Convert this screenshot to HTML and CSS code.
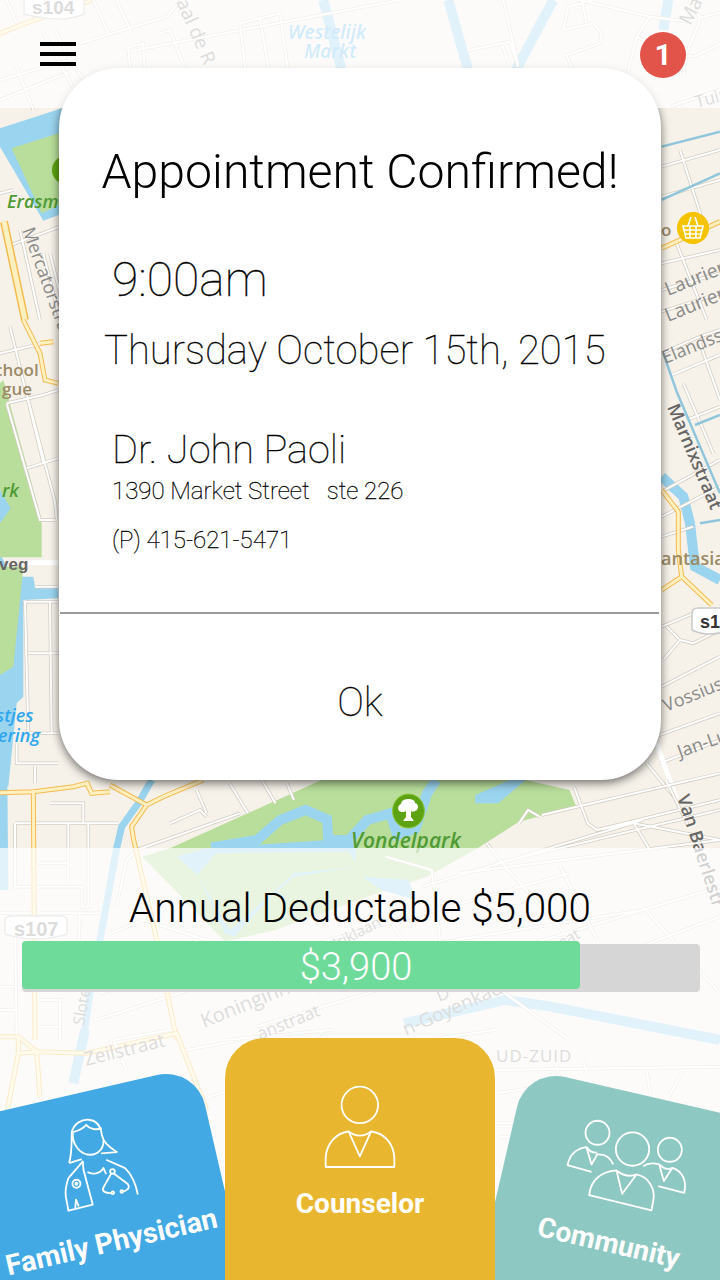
FILE: index.html
```html
<!DOCTYPE html>
<html lang="en">

<head>
  <meta name="viewport" content="width=device-width, initial-scale=1.0">
  <meta charset="utf-8">
  <title>Appointment Confirmed</title>
  <link rel="stylesheet" href="styles.css">
</head>

<body>
  <div class="screen">

    <!-- map backdrop, traced in groups so each strip keeps its own scale -->
    <svg class="map" viewBox="0 0 720 1280" width="720" height="1280">
      <defs>
        <path id="st-top" d="M240 130L500 50L545 0M0 240L240 170M20 0L50 70M130 100L240 300M50 200L100 330M165 90L215 190L280 280M380 145L430 130L440 324M480 100L510 90L600 324M720 70L840 40L880 324M720 70L750 324M780 55L825 324M0 300L210 215M385 145L400 324M280 0L330 110M350 0L395 100M410 150L1200 0M1410 150L1530 125L1555 200M1505 130L1530 200M1510 0L1555 200M1690 90L1780 70L1805 100L1800 130L1700 165L1725 230M1690 90L1705 20L1780 0M1760 70L1745 0M1950 50L1910 110L2000 155L2080 170L2230 100M1740 0L1950 50L2070 65L2110 50L2180 35L2250 70L2350 105M2100 60L2060 160L2050 230M1980 150L1950 230M1910 110L1880 230M2070 0L2080 30L2105 55"/>
        <path id="st-eras" d="M0 580L40 570M20 740L180 680M130 760L180 960M150 760L200 960M60 690L120 960"/>
        <path id="st-left" d="M0 100L130 70M20 250L130 225L175 210M20 250L120 600L165 600M85 240L165 545L170 600M80 445L175 415M30 20L130 430M75 845L175 845M75 845L85 1240L175 1240M150 845L155 1240M85 1000L175 1000M50 1270L50 1330L175 1330M105 1340L105 1390M105 800L175 800"/>
        <path id="st-right" d="M185 100L300 50L360 30M215 165L360 105M260 300L360 260M185 515L360 420M185 590L360 500M185 650L280 620M185 920L280 880M190 1020L240 960L200 920M240 960L280 970L360 930M185 1100L360 1010M165 1250L360 1180M180 1330L360 1260M140 1330L230 1440M250 190L340 400M300 70L360 240"/>
        <path id="st-right2" d="M905 500L1080 450M905 590L1080 540M960 450L1040 700M905 790L1080 750M950 730L1040 960M905 870L1080 820M905 935L1080 880M930 320L1080 270"/>
        <path id="st-mid" d="M500 70L540 160M570 60L600 130M625 70L640 120M1060 250L1100 320L1250 550M1250 80L1280 190L1300 210L1380 190L1420 280M1130 190L1150 150L1175 170M1180 165L1568 40M1300 210L1568 120M1380 190L1568 240M1080 310L1568 150M1220 320L1300 540M1000 340L1568 240M1450 60L1500 200M920 380L1400 180M840 290L940 330L960 560M400 660L1240 340M560 800L1568 380M900 560L1400 450M1000 600L1240 840M1280 620L1568 470M1400 440L1568 700M600 530L700 700M840 470L980 720"/>
        <path id="st-corner" d="M45 130L355 130M45 130L45 320L245 320L245 380L265 380L265 310M205 130L205 310M115 250L205 250M265 130L265 320M150 70L250 70L250 130M510 130L600 90L620 110M590 30L620 100M410 210L720 100M410 210L380 240L350 380M330 460L430 420L620 480M300 640L720 520M290 720L600 620M0 400L300 400M45 400L50 780M0 620L50 620M0 690L50 690M120 660L180 660L180 780M120 740L180 740M240 400L230 620"/>
        <path id="st-low" d="M340 30L510 0M340 30L380 120M560 60L720 30M630 200L720 170"/>
        <path id="st-low2" d="M0 30L320 0M275 20L300 0M640 25L810 0"/>
        <path id="st-low3" d="M20 30L690 20M20 100L150 80M20 190L90 190M30 230L80 230M290 40L280 0M470 30L480 100M580 30L530 120M210 60L200 20"/>
        <path id="hw-top" d="M0 100L70 72L250 10L275 0M2260 70L2270 0"/>
        <path id="hw-eras" d="M12 665L75 960"/>
        <path id="hw-left" d="M70 0L120 100L135 180L175 190M120 70L160 65"/>
        <path id="hw-right" d="M185 510L235 575L235 690L245 770L335 855M185 810L245 770"/>
        <path id="hw-right2" d="M905 745L1080 665"/>
        <path id="hw-corner" d="M0 38L100 35L220 20L260 10L275 40L330 35M260 5L275 40M330 15L440 75L490 50L610 0M440 75L395 140L400 175L470 480L530 780M100 30L105 780"/>
        <path id="hw-low" d="M0 20L55 20L110 65L260 70L530 10L620 240M55 20L55 70L110 65M55 70L20 250M110 65L120 200"/>
      </defs>
      <rect width="720" height="1280" fill="#f6f2ea"/>

      <!-- top band -->
      <g transform="scale(.3333)">
        <path class="canal" d="M970 0L1030 230"/>
        <path class="canal" d="M1345 0L1410 230"/>
        <path class="canal" d="M1660 0L1500 300"/>
        <path class="canal" d="M2005 0L1990 90"/>
        <use href="#st-top" class="st"/><use href="#st-top" class="st-in"/>
        <use href="#hw-top" class="hw"/><use href="#hw-top" class="hw-in"/>
        <path class="canal-thin" d="M2435 0L2305 320L2265 440"/>
      </g>

      <!-- erasmus park -->
      <g transform="scale(.3333)">
        <path class="water" d="M0 385L200 320L190 640L130 662L0 440Z"/>
        <path class="park" d="M35 445L190 395L190 610L125 640Z"/>
        <use href="#st-eras" class="st"/><use href="#st-eras" class="st-in"/>
        <use href="#hw-eras" class="hw-wide"/><use href="#hw-eras" class="hw-wide-in"/>
      </g>
      <circle cx="66" cy="170" r="14" fill="#5da311"/>

      <!-- left strip -->
      <g transform="translate(0 320) scale(.3333)">
        <path class="water" d="M0 700L35 770L100 770L105 800L175 800L175 835L70 840L70 1130L50 1150L25 1400L0 1400Z"/>
        <path class="park" d="M0 190L10 180L125 600L125 712L0 712Z"/>
        <path class="park" d="M40 740L70 740L40 1040L0 1065L0 740Z"/>
        <path class="water" d="M0 510L32 565L0 610Z"/>
        <use href="#st-left" class="st"/><use href="#st-left" class="st-in"/>
        <path class="st-wide" d="M85 728L175 728"/>
        <use href="#hw-left" class="hw"/><use href="#hw-left" class="hw-in"/>
      </g>

      <!-- right strip -->
      <g transform="translate(600 320) scale(.3333)">
        <path class="canal" d="M185 470L250 530L270 610L285 740L360 780"/>
        <path class="canal-thin" d="M300 610L360 600"/>
        <use href="#st-right" class="st"/><use href="#st-right" class="st-in"/>
        <path class="st-wide" d="M170 1270L230 1440"/>
        <path class="canal-thin" d="M190 100L230 215L330 450L360 520M285 315L360 285"/>
        <use href="#hw-right" class="hw"/><use href="#hw-right" class="hw-in"/>
      </g>
      <g transform="translate(360 0) scale(.3333)">
        <use href="#st-right2" class="st"/><use href="#st-right2" class="st-in"/>
        <path class="canal-thin" d="M905 440L1080 395M905 600L1080 520"/>
        <use href="#hw-right2" class="hw"/><use href="#hw-right2" class="hw-in"/>
      </g>

      <!-- vondelpark and everything under the lower panel -->
      <g transform="translate(0 760) scale(.4592 .3333)">
        <path class="park" d="M700 60L1145 60L1240 90L1255 140L1130 185L1040 265L930 350L800 410L600 510L490 545L310 290L370 265Z"/>
        <path class="canal" d="M460 262L560 240L610 180L665 150L712 178L715 240L760 240L800 180L850 160L865 225L905 205L930 100L950 60"/>
        <path class="water" d="M715 240L775 240L775 320L640 350L590 410L510 530L490 520L430 345L385 290L450 265Z"/>
        <path class="park" d="M430 345L470 280L760 275L780 320L640 340L560 440L500 510Z"/>
        <path class="water" d="M790 350L890 360L905 420L830 390Z"/>
        <path class="water" d="M1035 105L1110 60L1145 60L1085 130L1035 130Z"/>
        <path class="canal" d="M880 790L1100 720L1200 740L1568 840"/>
        <use href="#st-mid" class="st"/><use href="#st-mid" class="st-in"/>
      </g>

      <!-- bottom left corner -->
      <g transform="translate(0 780) scale(.3333)">
        <path class="water" d="M0 0L22 0L25 330L0 330Z"/>
        <path class="canal-mid" d="M455 0L415 70L365 140L350 205L300 480L270 640L250 780"/>
        <use href="#st-corner" class="st"/><use href="#st-corner" class="st-in"/>
        <use href="#hw-corner" class="hw"/><use href="#hw-corner" class="hw-in"/>
      </g>

      <g transform="translate(0 1030) scale(.3333)">
        <path class="canal" d="M255 0L220 160"/>
        <use href="#hw-low" class="hw"/><use href="#hw-low" class="hw-in"/>
        <use href="#st-low" class="st"/><use href="#st-low" class="st-in"/>
      </g>
      <g transform="translate(225 1030) scale(.3333)">
        <use href="#st-low2" class="st"/><use href="#st-low2" class="st-in"/>
      </g>
      <g transform="translate(490 1060) scale(.3333)">
        <use href="#st-low3" class="st"/><use href="#st-low3" class="st-in"/>
      </g>

      <!-- shields -->
      <path class="shield" d="M24 -6H84V14Q62 24 24 14Z"/>
      <path class="shield" d="M5 921Q5 916 11 916H61Q67 916 67 921V934Q36 944 5 934Z"/>
      <path class="shield" d="M692 614Q692 608 698 608H730V630Q708 638 692 630Z"/>

      <!-- pins -->
      <circle cx="693" cy="228" r="16" fill="#f4c302"/>
      <path class="basket" d="M683 226H703L700 238H686ZM688 226L691 217M698 226L695 217M684 230H702M685 234H701M690 226V238M696 226V238"/>
      <ellipse cx="408.500" cy="811" rx="16" ry="17" fill="#5da311" stroke="#8fc63f"/>
      <path class="tree" d="M408 799c-5 0-7 3-7 5-4 1-4 8 1 8 1 0 3 0 4-1v6l-3 4h11l-3-4v-6c1 1 3 1 4 0 4-1 4-7 0-8 0-3-3-4-7-4z"/>

      <!-- labels -->
      <text class="lb lb-bold" x="32" y="14" font-size="19">s104</text>
      <text class="lb lb-bold" x="14" y="936" font-size="20">s107</text>
      <text class="lb lb-bold lb-dark" x="700" y="628" font-size="18">s1</text>
      <text class="lb" font-size="19" transform="translate(176 2) rotate(66)">aal de R</text>
      <text class="lb lb-blue" x="288" y="39" font-size="19">Westelijk</text>
      <text class="lb lb-blue" x="304" y="58" font-size="19">Markt</text>
      <text class="lb" font-size="19" transform="translate(690 26) rotate(-62)">Mar</text>
      <text class="lb" font-size="17" transform="translate(697 108) rotate(-15)">Tuin</text>
      <text class="lb lb-park" x="7" y="208" font-size="18">Erasmus</text>
      <text class="lb" font-size="18" transform="translate(22 230) rotate(70)">Mercatorstraat</text>
      <text class="lb" font-size="19" transform="translate(668 296) rotate(-22)">Laurier</text>
      <text class="lb" font-size="19" transform="translate(668 322) rotate(-22)">Laurier</text>
      <text class="lb lb-brown" x="-6" y="376" font-size="17">chool</text>
      <text class="lb lb-brown" x="2" y="395" font-size="17">gue</text>
      <text class="lb lb-brown" x="661" y="236" font-size="17">o</text>
      <text class="lb lb-park" x="2" y="497" font-size="18">rk</text>
      <text class="lb lb-bold lb-gray" x="-1" y="570" font-size="17">veg</text>
      <text class="lb lb-sky" x="-4" y="722" font-size="18">stjes</text>
      <text class="lb lb-sky" x="-2" y="742" font-size="18">ering</text>
      <text class="lb" font-size="18" transform="translate(665 364) rotate(-22)">Elandss</text>
      <text class="lb lb-gray" font-size="18" font-weight="600" transform="translate(667 407) rotate(67)">Marnixstraat</text>
      <text class="lb lb-brown" x="661" y="565" font-size="18">antasia</text>
      <text class="lb" font-size="18" transform="translate(666 712) rotate(-22)">Vossius</text>
      <text class="lb" font-size="18" transform="translate(680 758) rotate(-20)">Jan-Lu</text>
      <text class="lb lb-gray" font-size="18" font-weight="600" transform="translate(677 797) rotate(72)">Van Baerlestr</text>
      <text class="lb lb-park" x="351" y="848" font-size="21">Vondelpark</text>
      <text class="lb" font-size="15" transform="translate(332 952) rotate(-28)">driklaan</text>
      <text class="lb" font-size="20" transform="translate(204 1028) rotate(-22)">Koninginn</text>
      <text class="lb" font-size="17" transform="translate(260 1040) rotate(-22)">anstraat</text>
      <text class="lb" font-size="19" transform="translate(406 1036) rotate(-24)">n-Goyenkade</text>
      <text class="lb" font-size="16" transform="translate(84 1026) rotate(-80)">Sloter</text>
      <text class="lb" font-size="19" transform="translate(86 1066) rotate(-14)">Zeilstraat</text>
      <text class="lb" font-size="17" x="496" y="1062" letter-spacing="1">UD-ZUID</text>
      <text class="lb" font-size="15" transform="translate(562 948) rotate(-30)">aat</text>
      <text class="lb" font-size="18" x="439" y="1002" transform="rotate(-22 439 1002)">D</text>
    </svg>

    <div class="topbar">
      <div class="menu"><span></span><span></span><span></span></div>
      <div class="badge">1</div>
    </div>

    <div class="spacer"></div>

    <div class="panel">
      <div class="deduct-title">Annual Deductable $5,000</div>
      <div class="track">
        <div class="fill" style="width: 82.3%">$3,900</div>
      </div>
      <div class="tabs">
        <div class="tab tab-family">
          <svg class="icon" width="110" height="110" viewBox="140 245 330 330">
            <g transform="rotate(13 305 410)">
              <path d="M207 405C216 375 214 345 215 312C222 285 245 274 265 275C290 277 302 295 305 320C308 340 330 360 350 372L303 376M207 405L245 393M218 312C235 308 250 302 258 290C270 305 290 306 305 300M218 315C216 350 240 380 270 380C295 380 312 360 310 335"/>
              <path d="M248 400L205 450C198 470 195 490 197 505L205 548L278 530L250 425ZM262 432C275 440 300 438 310 420L318 438M318 395L375 420C395 440 408 470 413 500M225 541L228 515L236 535"/>
              <circle cx="229" cy="467" r="12"/>
              <circle cx="229" cy="467" r="3"/>
              <circle cx="337" cy="430" r="7"/>
              <path d="M333 437L310 478C303 490 318 496 333 495M342 437L383 468C392 480 378 490 368 490"/>
              <circle cx="338" cy="494" r="4"/>
              <circle cx="365" cy="490" r="4"/>
            </g>
          </svg>
          <div class="tab-label">Family Physician</div>
        </div>
        <div class="tab tab-counselor">
          <svg class="icon" width="74" height="85" viewBox="295 162 223 256">
            <circle cx="406" cy="225" r="55"/>
            <path d="M303 412V385C305 340 335 310 372 305L406 380L440 305C480 310 508 340 510 385V412ZM372 305Q406 330 440 305"/>
          </svg>
          <div class="tab-label">Counselor</div>
        </div>
        <div class="tab tab-community">
          <svg class="icon" width="130" height="130" viewBox="215 130 390 390">
            <g transform="rotate(-13 410 325)">
              <circle cx="323" cy="225" r="36"/>
              <circle cx="428" cy="274" r="50"/>
              <circle cx="540" cy="276" r="36"/>
              <path d="M305 342L233 322C240 290 260 272 290 268L305 320L322 290C345 288 362 300 370 320M290 268Q305 288 322 284"/>
              <path d="M298 412C302 370 330 342 380 338L397 408L440 350C478 358 498 395 490 430L485 458ZM380 338Q410 362 440 350"/>
              <path d="M460 325C475 315 490 315 508 320L522 370L548 330C578 340 592 370 583 405L505 385M508 320Q530 340 548 330"/>
            </g>
          </svg>
          <div class="tab-label">Community</div>
        </div>
      </div>
    </div>

    <div class="dialog">
      <div class="dlg-title">Appointment Confirmed!</div>
      <div class="dlg-time">9:00am</div>
      <div class="dlg-date">Thursday October 15th, 2015</div>
      <div class="dlg-doctor">Dr. John Paoli</div>
      <div class="dlg-address">1390 Market Street&nbsp;&nbsp; ste 226</div>
      <div class="dlg-phone">(P) 415-621-5471</div>
      <div class="dlg-line"></div>
      <div class="dlg-ok">Ok</div>
    </div>

  </div>
</body>

</html>
```

FILE: styles.css
```css
body, div, span {
  margin: 0;
  padding: 0;
}

body {
  background: #f6f2ea;
  font-family: Roboto, "Liberation Sans", sans-serif;
}

.screen {
  position: relative;
  width: 720px;
  height: 1280px;
  overflow: hidden;
  display: flex;
  flex-direction: column;
}

/* map */
.map {
  position: absolute;
  top: 0;
  left: 0;
}

.map path {
  fill: none;
  vector-effect: non-scaling-stroke;
}

.map .park {
  fill: #b9de9b;
}

.map .water {
  fill: #9bd4ef;
}

.map .canal {
  stroke: #9bd4ef;
  stroke-width: 10;
}

.map .canal-mid {
  stroke: #9bd4ef;
  stroke-width: 7;
}

.map .canal-thin {
  stroke: #8fc6dc;
  stroke-width: 2.5;
}

.map .st {
  stroke: #d3cdc0;
  stroke-width: 3.5;
}

.map .st-in {
  stroke: #fff;
  stroke-width: 2;
}

.map .st-wide {
  stroke: #fff;
  stroke-width: 5;
}

.map .hw {
  stroke: #f5bb4e;
  stroke-width: 5;
}

.map .hw-in {
  stroke: #fff0c2;
  stroke-width: 3;
}

.map .hw-wide {
  stroke: #f5bb4e;
  stroke-width: 8;
}

.map .hw-wide-in {
  stroke: #fff0c2;
  stroke-width: 5;
}

.map .shield {
  fill: #fff;
  stroke: #c9c9c9;
  stroke-width: 1.5;
}

.map .basket {
  stroke: #fff;
  stroke-width: 1.6;
}

.map .tree {
  fill: #fff;
}

.lb {
  font-family: "Open Sans", sans-serif;
  fill: #8a8a88;
}

.lb-bold {
  font-family: "Liberation Sans", sans-serif;
  font-weight: bold;
}

.lb-dark {
  fill: #333;
}

.lb-gray {
  fill: #666;
}

.lb-blue {
  font-style: italic;
  font-weight: 600;
  fill: #66bdf0;
}

.lb-sky {
  font-style: italic;
  font-weight: 600;
  fill: #2da6ee;
}

.lb-park {
  font-style: italic;
  font-weight: 600;
  fill: #4f9a34;
}

.lb-brown {
  font-weight: 600;
  fill: #9c8a66;
}

/* top bar */
.topbar {
  position: relative;
  z-index: 3;
  flex: none;
  height: 108px;
  box-sizing: border-box;
  padding: 32px 34px 0 40px;
  display: flex;
  justify-content: space-between;
  align-items: flex-start;
  background: rgba(255, 255, 255, .7);
}

.menu {
  margin-top: 10px;
  width: 36px;
  display: flex;
  flex-direction: column;
  gap: 6px;
}

.menu span {
  display: block;
  height: 4px;
  background: #000;
}

.badge {
  width: 46px;
  height: 46px;
  border-radius: 50%;
  background: #e2534a;
  color: #fff;
  font-size: 30px;
  font-weight: 700;
  line-height: 46px;
  text-align: center;
}

.spacer {
  flex: 1;
}

/* deductable + tabs */
.panel {
  position: relative;
  flex: none;
  height: 432px;
  box-sizing: border-box;
  padding-top: 37px;
  background: rgba(255, 255, 255, .7);
}

.deduct-title {
  font-size: 40.400px;
  font-weight: 300;
  line-height: 48px;
  text-align: center;
  color: #000;
}

.track {
  margin: 11px 20px 0 22px;
  height: 48px;
  border-radius: 4px;
  background: #d6d6d6;
}

.fill {
  margin-top: -3px;
  height: 48px;
  float: left;
  box-sizing: border-box;
  padding-left: 110px;
  border-radius: 4px;
  background: #6fdb9b;
  color: #fff;
  font-size: 38px;
  font-weight: 300;
  line-height: 53px;
  text-align: center;
}

.tabs {
  margin: 46px 0 0 -74px;
  height: 242px;
  display: flex;
  align-items: flex-start;
}

.tab {
  flex: none;
  width: 270px;
  height: 300px;
  box-sizing: border-box;
  border-radius: 40px;
  display: flex;
  flex-direction: column;
  align-items: center;
  color: #fff;
}

.tab-label {
  font-size: 28px;
  font-weight: 700;
  line-height: 36px;
  white-space: nowrap;
}

.icon {
  flex: none;
  fill: none;
  stroke: #fff;
  stroke-width: 5.500;
  stroke-linejoin: round;
}

.tab-family {
  margin: 28px 29px 0 0;
  padding: 20px 0 0 26px;
  background: #42a9e4;
  transform-origin: top right;
  transform: rotate(-13deg);
}

.tab-family .icon {
  margin-left: 16px;
}

.tab-family .tab-label {
  margin-top: 5px;
  font-size: 28.500px;
}

.tab-counselor {
  position: relative;
  z-index: 2;
  padding-top: 46px;
  background: #e8b72f;
}

.tab-counselor .tab-label {
  margin-top: 17px;
}

.tab-community {
  margin: 30px 0 0 31px;
  padding: 8px 30px 0 0;
  background: #8ec8c2;
  transform-origin: top left;
  transform: rotate(13deg);
}

.tab-community .tab-label {
  margin-top: -4px;
}

/* confirmation dialog */
.dialog {
  position: absolute;
  z-index: 2;
  top: 68px;
  left: 59px;
  width: 602px;
  height: 712px;
  box-sizing: border-box;
  padding-top: 74px;
  border-radius: 60px;
  background: #fff;
  box-shadow: 0 3px 10px rgba(0, 0, 0, .55);
  display: flex;
  flex-direction: column;
  color: #000;
  font-weight: 100;
  -webkit-text-stroke: .3px #000;
}

.dlg-title {
  font-size: 48.200px;
  font-weight: 300;
  line-height: 60px;
  text-align: center;
  white-space: nowrap;
  -webkit-text-stroke: 0;
}

.dlg-time {
  margin: 48px 0 0 53px;
  font-size: 48px;
  line-height: 60px;
}

.dlg-date {
  margin: 16px 0 0 45px;
  font-size: 40px;
  line-height: 50px;
  white-space: nowrap;
}

.dlg-doctor {
  margin: 49px 0 0 53px;
  font-size: 39.700px;
  line-height: 50px;
}

.dlg-address {
  margin: 1px 0 0 53px;
  font-size: 24px;
  line-height: 30px;
}

.dlg-phone {
  margin: 19px 0 0 53px;
  font-size: 24px;
  line-height: 30px;
}

.dlg-line {
  margin: 57px 2px 0 1px;
  height: 2px;
  background: #999;
}

.dlg-ok {
  flex: 1;
  padding-top: 10px;
  font-size: 40px;
  display: flex;
  align-items: center;
  justify-content: center;
}
```
